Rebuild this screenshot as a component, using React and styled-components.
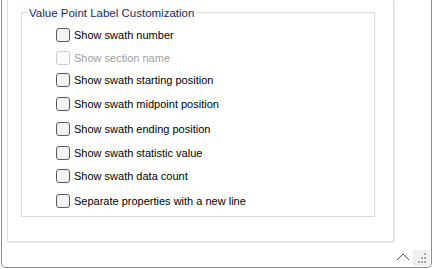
import React from 'react';
import styled, { createGlobalStyle } from 'styled-components';

const GlobalStyle = createGlobalStyle`
  html, body {
    margin: 0;
    padding: 0;
    background: #fff;
  }
  body {
    font-family: 'Liberation Sans', Arial, sans-serif;
    font-size: 11px;
    color: #000;
  }
`;

const Window = styled.div`
  display: flex;
  flex-direction: column;
  box-sizing: border-box;
  width: 431px;
  height: 268px;
  margin-left: 1px;
  padding-left: 5px;
  background: #fff;
  border: 1px solid #8c8c8c;
  border-top: none;
  border-radius: 0 0 5px 5px;
`;

const Panel = styled.div`
  box-sizing: border-box;
  width: 387px;
  height: 242px;
  padding: 12px 0 0 13px;
  border: 1px solid #dedede;
  border-top: none;
  box-shadow: 1px 1px 0 #eeeeee;
`;

const Group = styled.section`
  position: relative;
  box-sizing: border-box;
  width: 354px;
  height: 205px;
  border: 1px solid #dcdcdc;
`;

const Title = styled.span`
  position: absolute;
  top: -8px;
  left: 5px;
  padding: 0 2px;
  background: #fff;
  font-size: 11.5px;
  line-height: 16px;
  color: #16296b;
  white-space: nowrap;
`;

const List = styled.div`
  display: flex;
  flex-direction: column;
  padding: 15px 0 0 34px;
`;

const Row = styled.label`
  display: flex;
  align-items: center;
  gap: 4px;
  height: 14px;
  margin-top: ${p => p.$gap || 0}px;
  color: ${p => (p.$disabled ? '#a0a0a0' : '#000')};
  white-space: nowrap;
`;

const Box = styled.span`
  box-sizing: border-box;
  flex: none;
  width: 14px;
  height: 14px;
  border: 1px solid ${p => (p.$disabled ? '#cbcbcb' : '#5c5c5c')};
  border-radius: 3px;
  background: ${p => (p.$disabled ? '#fbfbfb' : '#f4f4f4')};
`;

const Footer = styled.div`
  flex: 1;
  display: flex;
  justify-content: flex-end;
  align-items: flex-end;
  gap: 3px;
  padding-right: 1px;
  padding-bottom: 1px;
`;

const Chevron = styled.svg`
  margin-bottom: 5px;
`;

const Grip = styled.svg`
  background: #f0f0f0;
`;

const items = [
  { label: 'Show swath number', gap: 0 },
  { label: 'Show section name', gap: 9, disabled: true },
  { label: 'Show swath starting position', gap: 8 },
  { label: 'Show swath midpoint position', gap: 10 },
  { label: 'Show swath ending position', gap: 11 },
  { label: 'Show swath statistic value', gap: 10 },
  { label: 'Show swath data count', gap: 9 },
  { label: 'Separate properties with a new line', gap: 11 },
];

const dots = [
  [11, 3],
  [8, 7],
  [11, 7],
  [5, 11],
  [8, 11],
  [11, 11],
];

export default function App() {
  return (
    <>
      <GlobalStyle />
      <Window>
        <Panel>
          <Group>
            <Title>Value Point Label Customization</Title>
            <List>
              {items.map(it => (
                <Row key={it.label} $gap={it.gap} $disabled={it.disabled}>
                  <Box $disabled={it.disabled} />
                  {it.label}
                </Row>
              ))}
            </List>
          </Group>
        </Panel>
        <Footer>
          <Chevron width="14" height="8" viewBox="0 0 14 8">
            <path d="M1 7 L7 1 L13 7" fill="none" stroke="#555" strokeWidth="1" />
          </Chevron>
          <Grip width="17" height="16" viewBox="0 0 17 16">
            {dots.map(([x, y]) => (
              <rect key={`${x}-${y}`} x={x} y={y} width="2" height="2" fill="#a8a8a8" />
            ))}
          </Grip>
        </Footer>
      </Window>
    </>
  );
}
